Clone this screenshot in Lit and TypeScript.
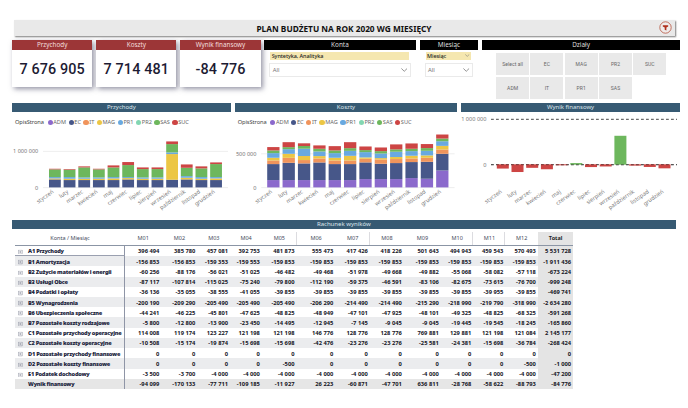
import { LitElement, html, svg, css } from "lit";
import { customElement, property } from "lit/decorators.js";

const MONTHS = ["styczeń", "luty", "marzec", "kwiecień", "maj", "czerwiec", "lipiec", "sierpień", "wrzesień", "październik", "listopad", "grudzień"];

const COLORS: Record<string, string> = {
  ADM: "#8b69cc", EC: "#475789", IT: "#f0945c", MAG: "#ecc644",
  PR1: "#69a9e0", PR2: "#83d6b2", SAS: "#6db75d", SUC: "#cd4544",
};

interface Series { key: string; values: number[]; }

/* values in thousands */
const REVENUE: Series[] = [
  { key: "EC", values: [222, 204, 204, 204, 204, 222, 204, 204, 213, 222, 204, 204] },
  { key: "MAG", values: [28, 37, 37, 37, 46, 37, 37, 37, 713, 46, 37, 46] },
  { key: "PR1", values: [37, 46, 37, 37, 37, 28, 37, 37, 46, 46, 46, 37] },
  { key: "SAS", values: [213, 204, 278, 222, 268, 333, 231, 231, 231, 231, 241, 361] },
  { key: "SUC", values: [18, 18, 28, 18, 56, 84, 46, 46, 74, 93, 56, 46] },
];
const COSTS: Series[] = [
  { key: "ADM", values: [109, 109, 109, 109, 109, 109, 124, 124, 124, 139, 129, 252] },
  { key: "EC", values: [238, 257, 248, 262, 238, 238, 248, 228, 238, 238, 252, 248] },
  { key: "IT", values: [54, 74, 50, 60, 54, 54, 54, 64, 60, 54, 60, 64] },
  { key: "MAG", values: [40, 60, 60, 35, 40, 69, 20, 20, 30, 40, 35, 54] },
  { key: "PR1", values: [69, 69, 109, 69, 69, 74, 79, 69, 79, 69, 69, 69] },
  { key: "SAS", values: [40, 30, 40, 40, 40, 40, 30, 35, 35, 35, 40, 40] },
  { key: "SUC", values: [50, 74, 40, 50, 64, 89, 54, 54, 74, 79, 60, 60] },
];
const RESULT = [-94.1, -170.1, -77.7, -109.2, -22, 36, -60.9, -47.7, 637, -28.8, -58.6, -88.8];

const COLUMNS = ["M01", "M02", "M03", "M04", "M05", "M06", "M07", "M08", "M09", "M10", "M11", "M12", "Total"];
const ROWS: [string, string][] = [
  ["A1 Przychody", "396 494|385 780|457 081|392 753|481 873|555 473|417 426|418 226|501 643|494 943|459 543|570 493|5 531 728"],
  ["B1 Amortyzacja", "-156 853|-156 853|-159 353|-159 553|-159 853|-159 853|-159 853|-159 853|-159 853|-159 853|-159 853|-159 853|-1 911 436"],
  ["B2 Zużycie materiałów i energii", "-60 256|-88 176|-56 021|-51 025|-46 482|-49 468|-51 978|-49 668|-49 882|-55 068|-58 082|-57 118|-673 224"],
  ["B3 Usługi Obce", "-87 117|-107 814|-115 025|-75 240|-79 800|-112 190|-59 375|-46 591|-83 106|-82 675|-73 615|-76 700|-999 248"],
  ["B4 Podatki i opłaty", "-36 136|-35 055|-38 555|-41 055|-39 855|-39 855|-39 855|-39 855|-39 855|-39 855|-39 955|-39 855|-469 741"],
  ["B5 Wynagrodzenia", "-200 190|-209 290|-205 490|-205 490|-205 490|-206 290|-214 490|-214 490|-215 290|-218 990|-219 790|-318 990|-2 634 280"],
  ["B6 Ubezpieczenia społeczne", "-44 241|-46 225|-45 801|-47 625|-48 825|-48 949|-47 101|-47 925|-48 101|-49 325|-48 825|-68 325|-591 268"],
  ["B7 Pozostałe koszty rodzajowe", "-5 800|-12 800|-13 900|-23 450|-14 495|-12 945|-7 145|-9 045|-9 045|-19 445|-19 545|-18 245|-165 860"],
  ["C1 Pozostałe przychody operacyjne", "114 008|119 174|123 227|121 198|121 198|146 776|128 776|128 776|769 881|129 881|121 198|121 084|2 145 177"],
  ["C2 Pozostałe koszty operacyjne", "-10 508|-15 174|-19 874|-15 698|-15 698|-42 476|-23 276|-23 276|-25 581|-24 381|-15 698|-36 784|-268 424"],
  ["D1 Pozostałe przychody finansowe", "0|0|0|0|0|0|0|0|0|0|0|0|0"],
  ["D2 Pozostałe koszty finansowe", "0|0|0|0|-500|0|0|0|0|0|0|-500|-1 000"],
  ["E1 Podatek dochodowy", "-3 500|-3 700|-4 000|-4 000|-4 000|-4 000|-4 000|-4 000|-4 000|-4 000|-4 000|-4 000|-47 200"],
  ["Wynik finansowy", "-94 099|-170 133|-77 711|-109 185|-11 927|26 223|-60 871|-47 701|636 811|-28 768|-58 622|-88 793|-84 776"],
];

const monthLabels = (first: number, pitch: number, y: number) =>
  MONTHS.map((m, i) => {
    const x = first + i * pitch;
    return svg`<text text-anchor="end" transform="translate(${x} ${y}) rotate(-35)">${m}</text>`;
  });

const chartStyles = css`
  :host { display: block; }
  svg { display: block; overflow: visible; }
  text { font-family: "Noto Sans", "Open Sans", sans-serif; font-size: 5.6px; fill: #777; }
  .grid { stroke: #e6e6e6; stroke-width: 0.7; }
  .dash { stroke: #333; stroke-width: 0.9; stroke-dasharray: 2.8 2.2; }
  .legend { display: flex; align-items: center; height: 8px; padding: 6px 0 0 3px; gap: 2.5px; font-size: 5.6px; color: #666; }
  .name { width: 30px; color: #444; font-size: 5.7px; letter-spacing: -0.08px; }
  .item { display: flex; align-items: center; gap: 0.6px; }
  .dot { width: 5.2px; height: 5.2px; border-radius: 50%; }
`;

@customElement("stacked-chart")
class StackedChart extends LitElement {
  @property({ attribute: false }) series: Series[] = [];
  @property({ type: Number }) width = 219;
  @property({ type: Number }) first = 37;
  @property({ type: Number }) pitch = 14.65;
  @property({ type: Number }) bar = 11.8;
  @property({ type: Number }) scale = 0.036;
  @property({ type: Number }) mark = 1000;
  @property() label = "";
  static styles = chartStyles;
  render() {
    const base = 61.4;
    const markY = base - this.mark * this.scale;
    return html`
      <div class="legend"><span class="name">OpisStrona</span>
        ${Object.keys(COLORS).map((k) => html`<span class="item"><span class="dot" style="background:${COLORS[k]}"></span>${k}</span>`)}
      </div>
      <svg width=${this.width} height="90" viewBox="0 0 ${this.width} 90">
        <line class="grid" x1=${this.first - 6} x2=${this.width - 3} y1=${markY} y2=${markY}></line>
        <line class="grid" x1=${this.first - 6} x2=${this.width - 3} y1=${base + 0.2} y2=${base + 0.2}></line>
        <text text-anchor="end" x=${this.first - 10.7} y=${markY + 2}>${this.label}</text>
        <text text-anchor="end" x=${this.first - 10.7} y=${base + 2.2}>0</text>
        ${MONTHS.map((_, i) => {
          let y = base;
          return this.series.map((s) => {
            const h = s.values[i] * this.scale;
            y -= h;
            return svg`<rect x=${this.first + i * this.pitch} y=${y} width=${this.bar} height=${h} fill=${COLORS[s.key]}></rect>`;
          });
        })}
        ${monthLabels(this.first + this.bar / 2 - 0.8, this.pitch, base + 5.2)}
      </svg>`;
  }
}

@customElement("result-chart")
class ResultChart extends LitElement {
  static styles = chartStyles;
  render() {
    const zero = 52.7, scale = 0.0454, first = 35.8, pitch = 14.7;
    const top = zero - 1000 * scale;
    return html`
      <svg width="219" height="90" viewBox="0 0 219 90">
        <line class="dash" x1="30" x2="216" y1=${top} y2=${top}></line>
        <text text-anchor="end" x="25.5" y=${top + 2}>1 000 000</text>
        <text text-anchor="end" x="25.5" y=${zero + 2}>0</text>
        <line class="dash" x1="30" x2="216" y1=${zero} y2=${zero}></line>
        ${RESULT.map((v, i) => {
          const h = Math.abs(v) * scale;
          return svg`<rect x=${first + i * pitch} y=${v < 0 ? zero - 0.4 : zero - h} width="12" height=${h} fill=${v < 0 ? "#cd4544" : "#6db75d"}></rect>`;
        })}
        <line class="dash" x1="30" x2="216" y1=${zero} y2=${zero} opacity="0.5"></line>
        ${monthLabels(first + 5.5, pitch, zero + 27.8)}
      </svg>`;
  }
}

@customElement("kpi-card")
class KpiCard extends LitElement {
  @property() label = "";
  @property() value = "";
  static styles = css`
    :host { display: flex; flex-direction: column; width: 80.3px; height: 46.7px; background: #fff; box-shadow: 2px 2px 5px rgba(60, 60, 90, 0.55); }
    .head { height: 10px; background: #9c3637; color: #f3dede; font-size: 6.3px; line-height: 10px; text-align: center; }
    .value { flex: 1; display: flex; align-items: center; justify-content: center; padding-top: 2.6px; white-space: pre;
      font-family: Roboto, sans-serif; font-weight: 500; font-size: 14.4px; letter-spacing: 0.12px; color: #1d1b33; }
  `;
  render() {
    return html`<div class="head">${this.label}</div><div class="value">${this.value}</div>`;
  }
}

@customElement("pnl-table")
class PnlTable extends LitElement {
  static styles = css`
    :host { display: block; }
    .row { display: grid; grid-template-columns: 110px 36.5px 36px 32.7px 31.8px 34.7px 38.8px 34.5px 34px 37px 32.5px 32px 32.5px 35.3px; width: 558.3px; height: 10.23px; }
    .row > span { display: flex; align-items: center; justify-content: flex-end; box-sizing: border-box; padding: 0.8px 2.2px 0 0; white-space: nowrap; }
    .row.head { height: 13.2px; border-bottom: 0.9px solid #8b95a5; color: #444a5a; font-size: 5.5px; }
    .row.head > span { justify-content: center; padding: 0; }
    .head .rule { box-shadow: inset -1px 0 #dcdce0; }
    .body { font-size: 5.75px; font-weight: 700; color: #15151f; }
    .row.body > .name { justify-content: flex-start; gap: 5.3px; padding-left: 3.2px; padding-right: 0; color: #23263e; border-right: 1.6px solid #8f95a6; font-size: 5.6px; letter-spacing: -0.24px; }
    .alt { background: #ebecee; }
    .sum { background: #e6e6e6; }
    .first .name { border-bottom: 0.8px solid #9aa0b0; }
    .total { background: #e4e4e4; }
    .head .total { font-weight: 700; color: #222; }
    svg { width: 4.6px; height: 4.6px; flex: none; transform: translateY(0.7px); }
    .blank { width: 4.6px; }
  `;
  render() {
    const ruled = ["M05", "M07", "M10", "M11"];
    return html`
      <div class="row head"><span>Konta / Miesiąc</span>
        ${COLUMNS.map((c) => html`<span class=${c === "Total" ? "total" : ruled.includes(c) ? "rule" : ""}>${c}</span>`)}
      </div>
      ${ROWS.map(([name, values], r) => html`
        <div class="row body ${r === ROWS.length - 1 ? "sum" : r % 2 ? "alt" : ""} ${r === 0 ? "first" : ""}">
          <span class="name">${r === ROWS.length - 1
            ? html`<i class="blank"></i>`
            : html`<svg viewBox="0 0 9 9"><path d="M.7.7h7.6v7.6H.7zM4.5 2.5v4M2.5 4.5h4" fill="none" stroke="#858998" stroke-width="1.1"/></svg>`}<b>${name}</b></span>
          ${values.split("|").map((v, c) => html`<span class=${c === 12 ? "total" : ""}>${v}</span>`)}
        </div>`)}
    `;
  }
}

@customElement("app-root")
class AppRoot extends LitElement {
  static styles = css`
    :host { display: block; box-sizing: border-box; width: 688px; height: 408px; overflow: hidden; background: #fff; padding: 20px 0 0 12px;
      font-family: "Noto Sans", "Open Sans", sans-serif; }
    .title { display: flex; align-items: center; justify-content: center; position: relative; margin-left: 1.5px; width: 661px; height: 16px;
      background: #e9e9e9; box-shadow: 1px 1px 1.5px rgba(0, 0, 0, 0.5); font-weight: 700; font-size: 8.3px; color: #111; }
    .funnel { position: absolute; right: 3px; top: 1.2px; width: 13px; height: 13px; }
    .top { display: flex; gap: 3.9px; height: 60px; margin-top: 4px; }
    .black { height: 10px; background: #000; color: #ddd; font-size: 6.4px; line-height: 9.6px; text-align: center; }
    .konta { width: 151.5px; margin-left: -0.4px; }
    .miesiac { width: 58.7px; }
    .dzialy { width: 197.8px; }
    .field { display: flex; justify-content: space-between; align-items: center; height: 7.6px; margin: 2.2px 7px 0 6px; padding: 0 1.5px; background: #f5e7b0; font-size: 5.5px; letter-spacing: -0.08px; color: #222; font-weight: 500; }
    .select { display: flex; justify-content: space-between; align-items: center; box-sizing: border-box; height: 14px; margin: 3.4px 5px 0; border: 1px solid #eaeaea; padding: 0 2.5px; font-size: 5.9px; color: #777; }
    .chev { width: 6.5px; height: 4px; fill: none; stroke: #777; stroke-width: 0.8; }
    .small { width: 4.5px; height: 3px; }
    .tiles { display: grid; grid-template-columns: repeat(5, 33px); grid-auto-rows: 22px; gap: 2.4px 1.3px; padding: 3px 0 0 14px; }
    .tile { display: flex; align-items: center; justify-content: center; background: #e9e9e9; color: #666; font-family: Roboto, sans-serif; font-size: 5px; letter-spacing: 0.08px; }
    .charts { display: flex; gap: 3.9px; height: 117.2px; margin-top: 3px; }
    .bar { height: 9.2px; background: #375a73; color: #dde6ec; font-size: 6px; line-height: 9px; text-align: center; }
    .panel { width: 218.8px; }
    .panel.mid { width: 222.6px; }
    .wide { width: 663.6px; margin-bottom: 2.4px; }
    pnl-table { margin-left: 3px; }
  `;
  render() {
    const chevron = (small = false) => html`<svg class="chev ${small ? "small" : ""}" viewBox="0 0 6.5 4"><path d="M.4.5l2.85 2.8L6.1.5"/></svg>`;
    return html`
      <div class="title">PLAN BUDŻETU NA ROK 2020 WG MIESIĘCY
        <svg class="funnel" viewBox="0 0 13 13"><circle cx="6.5" cy="6.5" r="5.7" fill="#efebea" stroke="#b5513c" stroke-width=".8"/><path d="M3.8 4.2h5.4v1.2L7.4 6.4v3l-1.7-.7V6.4L3.8 5.4z" fill="#b0301c"/></svg>
      </div>
      <div class="top">
        <kpi-card label="Przychody" value="7 676 905"></kpi-card>
        <kpi-card label="Koszty" value="7 714 481"></kpi-card>
        <kpi-card label="Wynik finansowy" value="-84 776"></kpi-card>
        <div class="konta"><div class="black">Konta</div>
          <div class="field">Syntetyka, Analityka</div>
          <div class="select">All${chevron()}</div>
        </div>
        <div class="miesiac"><div class="black">Miesiąc</div>
          <div class="field">Miesiąc${chevron(true)}</div>
          <div class="select">All${chevron()}</div>
        </div>
        <div class="dzialy"><div class="black">Działy</div>
          <div class="tiles">${["Select all", "EC", "MAG", "PR2", "SUC", "ADM", "IT", "PR1", "SAS"].map((t) => html`<div class="tile">${t}</div>`)}</div>
        </div>
      </div>
      <div class="charts">
        <div class="panel"><div class="bar">Przychody</div>
          <stacked-chart .series=${REVENUE} label="1 000 000"></stacked-chart></div>
        <div class="panel mid"><div class="bar">Koszty</div>
          <stacked-chart .series=${COSTS} width="222.6" first="32.2" pitch="15.36" bar="12.3" scale="0.0672" mark="500" label="500 000"></stacked-chart></div>
        <div class="panel"><div class="bar">Wynik finansowy</div><result-chart></result-chart></div>
      </div>
      <div class="bar wide">Rachunek wyników</div>
      <pnl-table></pnl-table>
    `;
  }
}
